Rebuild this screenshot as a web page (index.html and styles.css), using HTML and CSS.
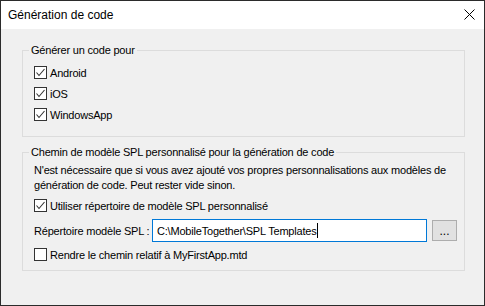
FILE: index.html
```html
<!DOCTYPE html>
<html lang="fr">

<head>
    <meta charset="UTF-8">
    <meta name="viewport" content="width=device-width, initial-scale=1.0">
    <title>Génération de code</title>
    <link rel="stylesheet" href="styles.css">
</head>

<body>
    <div class="dialog">
        <!-- barre de titre -->
        <div class="titlebar">
            <span class="title">Génération de code</span>
            <span class="close">
                <svg width="11" height="11" viewBox="0 0 11 11">
                    <path d="M0.5 0.5 L10.5 10.5 M10.5 0.5 L0.5 10.5" stroke="#000" stroke-width="1" fill="none" />
                </svg>
            </span>
        </div>

        <div class="content">
            <!-- plateformes -->
            <fieldset class="group group-targets">
                <legend>Générer un code pour</legend>
                <div class="group-body">
                    <label class="check"><span class="box"><svg class="tick" width="11" height="11" viewBox="0 0 11 11"><path d="M1.5 5.5 L4 8.5 L9.5 2" /></svg></span>Android</label>
                    <label class="check"><span class="box"><svg class="tick" width="11" height="11" viewBox="0 0 11 11"><path d="M1.5 5.5 L4 8.5 L9.5 2" /></svg></span>iOS</label>
                    <label class="check"><span class="box"><svg class="tick" width="11" height="11" viewBox="0 0 11 11"><path d="M1.5 5.5 L4 8.5 L9.5 2" /></svg></span>WindowsApp</label>
                </div>
            </fieldset>

            <!-- chemin SPL -->
            <fieldset class="group group-spl">
                <legend>Chemin de modèle SPL personnalisé pour la génération de code</legend>
                <div class="group-body">
                    <p class="hint">N'est nécessaire que si vous avez ajouté vos propres personnalisations aux modèles de<br>génération de code. Peut rester vide sinon.</p>
                    <label class="check check-spl"><span class="box"><svg class="tick" width="11" height="11" viewBox="0 0 11 11"><path d="M1.5 5.5 L4 8.5 L9.5 2" /></svg></span>Utiliser répertoire de modèle SPL personnalisé</label>
                    <div class="path-row">
                        <span class="path-label">Répertoire modèle SPL :</span>
                        <div class="path-input">C:\MobileTogether\SPL Templates<span class="caret"></span></div>
                        <button class="browse">...</button>
                    </div>
                    <label class="check check-relative"><span class="box"></span>Rendre le chemin relatif à MyFirstApp.mtd</label>
                </div>
            </fieldset>
        </div>
    </div>
</body>

</html>
```

FILE: styles.css
```css
body {
    margin: 0;
    font-family: "Liberation Sans", Arial, sans-serif;
    font-size: 11px;
    letter-spacing: -0.2px;
    color: #000;
    background-color: #f0f0f0;
}

.dialog {
    width: 485px;
    height: 306px;
    box-sizing: border-box;
    border: 1px solid #2b2b2b;
    background-color: #f0f0f0;
    display: flex;
    flex-direction: column;
}

.titlebar {
    height: 28px;
    background-color: #fff;
    display: flex;
    align-items: center;
    justify-content: space-between;
    padding: 0 9px 0 7px;
}

.title {
    font-size: 12px;
    letter-spacing: 0;
    padding-bottom: 1px;
}

.close {
    display: flex;
    padding-bottom: 1px;
}

.content {
    padding: 13px 19px 0 21px;
    display: flex;
    flex-direction: column;
}

/* group boxes */
.group {
    margin: 0;
    border: 1px solid #dcdcdc;
    padding: 4px 6px 11px 6px;
    min-width: 0;
}

.group legend {
    padding: 0 2px;
    line-height: 16px;
}

.group-body {
    padding-left: 5px;
    display: flex;
    flex-direction: column;
    white-space: nowrap;
}

.group-spl {
    margin-top: 7px;
    padding-top: 3px;
    padding-bottom: 5px;
}

/* cases à cocher */
.check {
    display: flex;
    align-items: center;
    height: 21px;
    gap: 3px;
}

.box {
    width: 13px;
    height: 13px;
    box-sizing: border-box;
    border: 1px solid #333;
    background-color: #fff;
    flex-shrink: 0;
    display: flex;
}

.tick path {
    stroke: #333;
    stroke-width: 1.1;
    fill: none;
}

.hint {
    margin: 0 0 2px 0;
    line-height: 15px;
}

.check-spl {
    margin-bottom: 3px;
}

.check-relative {
    margin-top: 2px;
}

/* ligne du répertoire */
.path-row {
    display: flex;
    align-items: center;
    height: 23px;
}

.path-label {
    width: 118px;
}

.path-input {
    width: 275px;
    height: 23px;
    box-sizing: border-box;
    border: 1px solid #0078d7;
    background-color: #fff;
    padding-left: 4px;
    display: flex;
    align-items: center;
}

.caret {
    display: inline-block;
    width: 1px;
    height: 15px;
    background-color: #000;
}

.browse {
    width: 25px;
    height: 21px;
    margin-left: 5px;
    padding: 0;
    border: 1px solid #adadad;
    background-color: #e1e1e1;
    font-family: inherit;
    font-size: 12px;
    line-height: 1;
}
```
